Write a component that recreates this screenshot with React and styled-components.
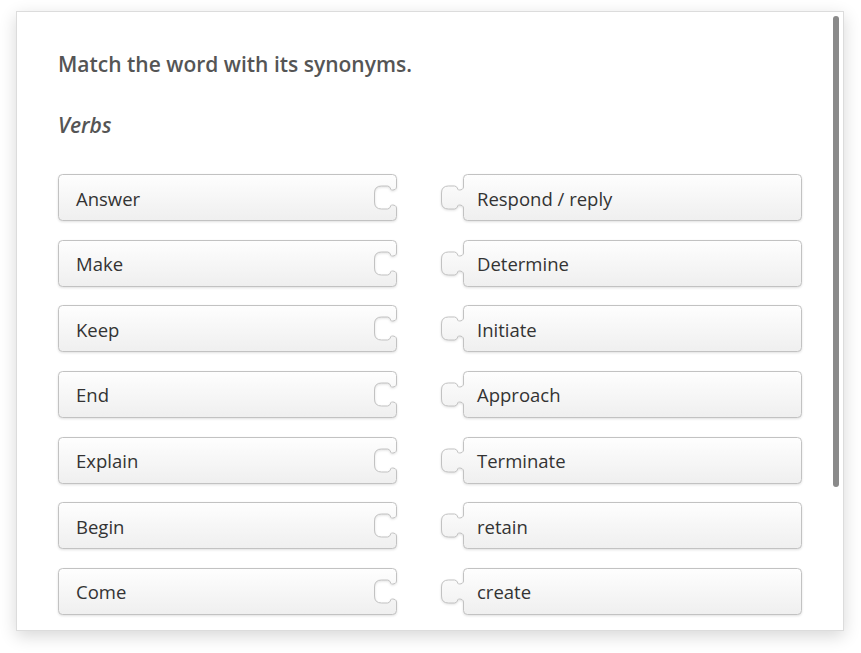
import React from "react";
import styled, { createGlobalStyle } from "styled-components";

const pairs = [
  ["Answer", "Respond / reply"],
  ["Make", "Determine"],
  ["Keep", "Initiate"],
  ["End", "Approach"],
  ["Explain", "Terminate"],
  ["Begin", "retain"],
  ["Come", "create"],
];

const GlobalStyle = createGlobalStyle`
  html, body {
    margin: 0;
    background: #ffffff;
    font-family: "Open Sans", "Liberation Sans", sans-serif;
  }
`;

const Page = styled.div`
  padding: 11px 17px 22px 16px;
`;

const Card = styled.div`
  position: relative;
  box-sizing: border-box;
  width: 828px;
  height: 620px;
  background: #ffffff;
  border: 1px solid #dcdcdc;
  box-shadow: 0 5px 16px rgba(0, 0, 0, 0.16);
  overflow: hidden;
`;

// scrollbar thumb drawn over the panel
const Thumb = styled.div`
  position: absolute;
  top: 4px;
  right: 4px;
  width: 6px;
  height: 471px;
  border-radius: 3px;
  background: #8a8a8a;
`;

const Content = styled.div`
  padding: 38px 41px 40px 41px;
`;

const Heading = styled.div`
  font-size: 21px;
  line-height: 28px;
  font-weight: 600;
  color: #555555;
`;

const Section = styled.div`
  margin-top: 33px;
  font-size: 21px;
  line-height: 28px;
  font-weight: 600;
  font-style: italic;
  color: #555555;
`;

const Rows = styled.div`
  margin-top: 35px;
  display: flex;
  flex-direction: column;
  gap: 17.67px;
`;

const Row = styled.div`
  display: flex;
  gap: 44px;
`;

const Piece = styled.div`
  position: relative;
  box-sizing: border-box;
  width: ${(p) => (p.$tab ? 361 : 339)}px;
  height: 48px;
  display: flex;
  align-items: center;
  padding-left: ${(p) => (p.$tab ? 36 : 18)}px;
`;

const Shape = styled.svg`
  position: absolute;
  left: 0;
  top: 0;
  overflow: visible;
  filter: drop-shadow(0 1px 1px rgba(0, 0, 0, 0.12));
`;

const Label = styled.span`
  position: relative;
  font-size: 18.5px;
  color: #333333;
  white-space: nowrap;
`;

// the bump drawn down a vertical edge at x = e, reaching 22px to the left
const bump = (e) =>
  `L${e},13 C${e},15 ${e - 2},16 ${e - 4},16 L${e - 5},16 C${e - 6},16 ${e - 6},12 ${e - 9},12 ` +
  `L${e - 15},12 Q${e - 22},12 ${e - 22},19 L${e - 22},28 Q${e - 22},35 ${e - 15},35 ` +
  `L${e - 9},35 C${e - 6},35 ${e - 6},31 ${e - 5},31 L${e - 4},31 C${e - 2},31 ${e},32 ${e},34`;

const socketPath =
  `M4.5,0.5 L334.5,0.5 Q338.5,0.5 338.5,4.5 ${bump(338.5)} ` +
  `L338.5,42.5 Q338.5,46.5 334.5,46.5 L4.5,46.5 Q0.5,46.5 0.5,42.5 L0.5,4.5 Q0.5,0.5 4.5,0.5 Z`;

const tabPath =
  `M26.5,0.5 Q22.5,0.5 22.5,4.5 ${bump(22.5)} L22.5,42.5 Q22.5,46.5 26.5,46.5 ` +
  `L356.5,46.5 Q360.5,46.5 360.5,42.5 L360.5,4.5 Q360.5,0.5 356.5,0.5 Z`;

function PuzzleShape({ tab }) {
  const w = tab ? 361 : 339;
  const id = tab ? "gradTab" : "gradSocket";
  return (
    <Shape width={w} height="47" viewBox={`0 0 ${w} 47`}>
      <defs>
        <linearGradient id={id} x1="0" y1="0" x2="0" y2="1">
          <stop offset="0" stopColor="#fefefe" />
          <stop offset="1" stopColor="#efefef" />
        </linearGradient>
      </defs>
      <path d={tab ? tabPath : socketPath} fill={`url(#${id})`} stroke="#c2c2c2" strokeWidth="1" />
    </Shape>
  );
}

export default function App() {
  return (
    <Page>
      <GlobalStyle />
      <Card>
        <Content>
          <Heading>Match the word with its synonyms.</Heading>
          <Section>Verbs</Section>
          <Rows>
            {pairs.map(([word, synonym]) => (
              <Row key={word}>
                <Piece>
                  <PuzzleShape />
                  <Label>{word}</Label>
                </Piece>
                <Piece $tab>
                  <PuzzleShape tab />
                  <Label>{synonym}</Label>
                </Piece>
              </Row>
            ))}
          </Rows>
        </Content>
        <Thumb />
      </Card>
    </Page>
  );
}
